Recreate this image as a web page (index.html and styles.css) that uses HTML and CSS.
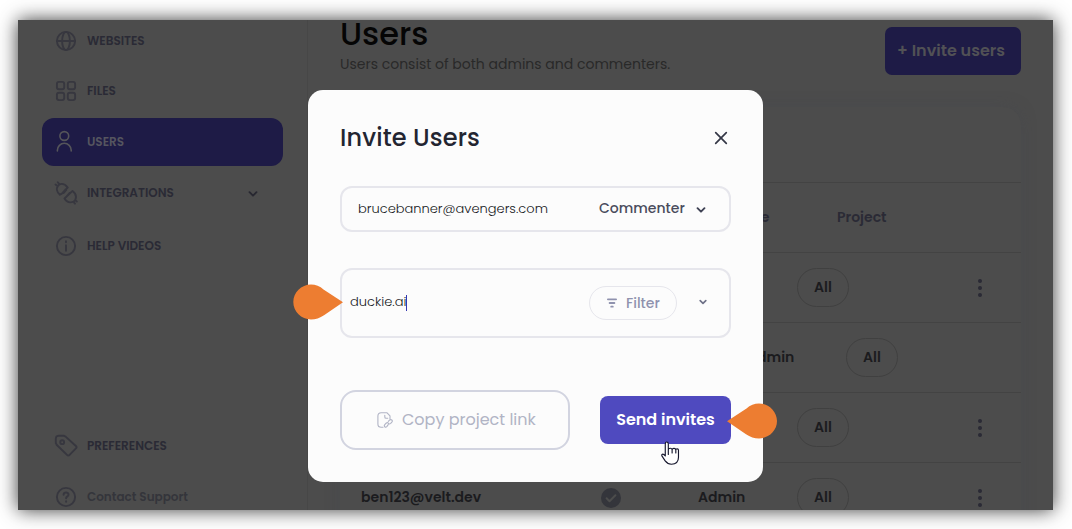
FILE: index.html
```
<!DOCTYPE html>
<html lang="en">
<head>
<meta charset="utf-8">
<title>Users</title>
<link rel="stylesheet" href="styles.css">
</head>
<body>
<div class="frame">
  <nav class="sidebar">
    <a class="nav nav-websites">
      <svg class="nav-icon" viewBox="0 0 24 24"><circle cx="12" cy="12" r="9.1"/><ellipse cx="12" cy="12" rx="3.9" ry="9.1"/><path d="M3 12h18"/></svg>
      <span>WEBSITES</span>
    </a>
    <a class="nav nav-files">
      <svg class="nav-icon" viewBox="0 0 24 24"><rect x="2.9" y="2.9" width="7.3" height="7.3" rx="2"/><rect x="13.8" y="2.9" width="7.3" height="7.3" rx="2"/><rect x="2.9" y="13.8" width="7.3" height="7.3" rx="2"/><rect x="13.8" y="13.8" width="7.3" height="7.3" rx="2"/></svg>
      <span>FILES</span>
    </a>
    <a class="nav nav-active">
      <svg class="nav-icon" viewBox="0 0 24 24"><circle cx="10.3" cy="6" r="4.4"/><path d="M3.4 21v-.8a6.9 6.9 0 0 1 13.8 0v.8"/></svg>
      <span>USERS</span>
    </a>
    <a class="nav nav-integrations">
      <svg class="nav-icon" viewBox="0 0 24 24"><path d="M1.500 3.500l2.300 1.700M3.800 1.200l1.600 2.200M3.800 5.200L5.400 3.400c2.300-1 5.500-.7 8.300 3.200l-2 1.800-3.800 4.300-2 1C2.700 11 2.200 7.500 3.800 5.200zM9.500 12l2.800-3.100M13 15l2.700-3M10.500 17.500l8-7.600c3.300 2.400 4.300 5.500 2.700 9.200l-1.600 1.600c-3.600 1.400-7 .2-9.100-3.200zM21.200 19.100l1.600 1.400M19.600 20.700l1.300 1.900"/></svg>
      <span>INTEGRATIONS</span>
      <svg class="nav-caret" viewBox="0 0 12 10"><path d="M2.500 3.200L6 6.700l3.500-3.500"/></svg>
    </a>
    <a class="nav nav-help">
      <svg class="nav-icon" viewBox="0 0 24 24"><circle cx="12" cy="12" r="9.1"/><path d="M12 11.300v5.400M12 7.300v1"/></svg>
      <span>HELP VIDEOS</span>
    </a>
    <a class="nav nav-preferences">
      <svg class="nav-icon" viewBox="0 0 24 24"><path d="M1.800 4.500l.7-2.200 2.200-.6 5.300.1 1.600.8 10.300 9.400c.9.900.9 1.600 0 2.400l-6.300 6.500c-.9.900-1.700.9-2.600 0L2.600 10.700l-.8-1.700z"/><circle cx="8.200" cy="8.200" r="1.900"/></svg>
      <span>PREFERENCES</span>
    </a>
    <a class="nav nav-contact">
      <svg class="nav-icon" viewBox="0 0 24 24"><circle cx="12" cy="12" r="9.1"/><path class="bold" d="M9.600 9.800c.1-3.200 4.900-3.200 4.900-.1 0 1.700-2.400 1.700-2.400 3.600M12.100 16.200v.5"/></svg>
      <span class="nav-mixed">Contact Support</span>
    </a>
  </nav>

  <main class="main">
    <header class="page-head">
      <div>
        <h1 class="page-title">Users</h1>
        <p class="page-sub">Users consist of both admins and commenters.</p>
      </div>
      <button class="invite">+ Invite users</button>
    </header>
    <section class="table">
      <div class="toolbar"></div>
      <div class="row row-head"><span></span><span></span><span class="head-role">Role</span><span class="head-project">Project</span></div>
      <div class="row"><span></span><span></span><span></span><span class="pill">All</span><i class="dots"></i></div>
      <div class="row row-self"><span></span><span></span><span>Admin</span><span class="pill">All</span></div>
      <div class="row"><span></span><span></span><span></span><span class="pill">All</span><i class="dots"></i></div>
      <div class="row">
        <span>ben123@velt.dev</span>
        <svg class="check" viewBox="0 0 20 20"><circle cx="10" cy="10" r="10"/><path d="M5.600 10.300l2.900 2.900 5.900-6"/></svg>
        <span>Admin</span><span class="pill">All</span><i class="dots"></i>
      </div>
    </section>
  </main>
</div>

<div class="modal" role="dialog">
  <div class="modal-head">
    <h2 class="modal-title">Invite Users</h2>
    <svg class="close" viewBox="0 0 20 20"><path d="M4.700 4.700l10.600 10.600M15.300 4.700L4.700 15.300"/></svg>
  </div>
  <div class="field field-email">
    <span class="address">brucebanner@avengers.com</span>
    <span class="commenter">Commenter</span>
    <svg class="caret" viewBox="0 0 12 10"><path d="M2.500 3.200L6 6.700l3.500-3.500"/></svg>
  </div>
  <div class="field field-site">
    <span class="typed">duckie.ai</span>
    <button class="filter">
      <svg class="filter-icon" viewBox="0 0 12 12"><path d="M1.900 2.300h8.200M3.600 6h4.800M5.200 9.700h1.600"/></svg>
      <span>Filter</span>
    </button>
    <svg class="caret caret-small" viewBox="0 0 12 10"><path d="M3.200 3.600L6 6.300l2.800-2.700"/></svg>
  </div>
  <div class="actions">
    <button class="copy">
      <svg class="copy-icon" viewBox="0 0 16 16"><path d="M6 15.300H4.200C2 15.300.9 14.200.9 12V4C.9 1.800 2 .7 4.200.7h5.600L13 3.900V7M7.800 3.300v1.600c0 .8.500 1.300 1.300 1.300h1.600"/><path d="M11.300 9.400l1.200-1.200c1.700-1.500 3.700.3 2.300 2l-1.100 1.200c-.9.800-1.700.7-2.200.2M11.200 12.600l-1.200 1.800c-1.700 1.800-3.500-.2-2.200-1.700l1.300-1.500c.9-.7 1.700-.6 2.200 0"/></svg>
      <span>Copy project link</span>
    </button>
    <button class="send">Send invites</button>
  </div>
</div>

<svg class="pin pin-site" viewBox="0 0 50 36"><path d="M50 18.300L31 31.200C27 34 22.500 35.400 18 35.400 8.300 35.400.3 27.700.3 18S8.300.4 18 .4c4.500 0 9 1.500 12.500 5z"/></svg>
<svg class="pin pin-send" viewBox="0 0 50 36"><path d="M0 18.300L19 31.200C23 34 27.500 35.400 32 35.400c9.700 0 18-7.700 18-17.400S41.700.4 32 .4c-4.500 0-9 1.500-12.500 5z"/></svg>
<svg class="pointer" viewBox="0 0 20 25"><path d="M7.700 14V3c0-2.700-3.200-2.700-3.200 0v12.600L3 14.100c-1.600-1-2.700.4-1.900 1.700l3.300 5c1.700 2.300 3.700 3.500 6.600 3.500 4.900 0 7.400-3 7.400-7.200V9.600c0-1.900-2.600-2-2.800-.4-.3-2-3.300-2.200-3.900-.4C11.100 7 8.100 7.100 7.700 9M11.700 8.500v4M15.600 9v3.500"/></svg>
</body>
</html>
```
FILE: styles.css
```
* { box-sizing: border-box; }
body {
  margin: 0;
  width: 1072px;
  height: 529px;
  padding: 20px 19px 19px 18px;
  position: relative;
  overflow: hidden;
  background: #fff;
  font-family: Poppins, Inter, sans-serif;
}
h1, h2, p { margin: 0; }
button { font-family: inherit; border: 0; padding: 0; background: none; }
svg { flex: none; fill: none; stroke-linecap: round; stroke-linejoin: round; }

.frame {
  display: flex;
  width: 1035px;
  height: 490px;
  background: #4c4c4c;
  box-shadow: 0 0 18px rgba(0, 0, 0, .78);
}
.sidebar {
  display: flex;
  flex-direction: column;
  width: 290px;
  height: 490px;
  padding: 0 24px;
  border-right: 1px solid #474747;
  overflow: hidden;
}
.nav {
  display: flex;
  flex: none;
  align-items: center;
  height: 48px;
  padding-left: 12px;
  color: #2a2a35;
  font-size: 12px;
  font-weight: 600;
}
.nav-icon { width: 24px; height: 24px; margin-right: 9px; stroke: #37373f; stroke-width: 1.9; }
.nav-icon .bold { stroke-width: 2; }
.nav-caret { width: 12px; height: 10px; margin: 1px 24px 0 auto; stroke: #282831; stroke-width: 1.9; }
.nav-websites { margin-top: -3px; }
.nav-files { margin-top: 2px; }
.nav-active { width: 241px; margin-top: 3px; border-radius: 12px; background: #1e1b46; color: #55555f; }
.nav-active .nav-icon { stroke: #55555a; stroke-width: 1.6; }
.nav-integrations { margin-top: 3px; }
.nav-help { margin-top: 5px; }
.nav-preferences { margin-top: 152px; }
.nav-contact { margin-top: 3px; }
.nav-mixed { color: #34353b; }

.main { width: 745px; height: 490px; padding: 0 32px; overflow: hidden; }
.page-head { display: flex; justify-content: space-between; height: 87px; }
.page-title { height: 34px; color: #050505; font-size: 32px; line-height: 28px; font-weight: 500; }
.page-sub { color: #292929; font-size: 14px; line-height: 20px; }
.invite {
  width: 136px;
  height: 48px;
  margin-top: 7px;
  padding: 0 4px 2px 0;
  border-radius: 7px;
  background: #1e1b46;
  color: #515155;
  font-size: 16px;
  font-weight: 600;
}
.table { height: 460px; border-radius: 18px; background: #4c4c4c; box-shadow: 0 0 14px rgba(69, 71, 78, .5); }
.toolbar { height: 76px; border-bottom: 1px solid #434343; }
.row {
  display: grid;
  grid-template-columns: 240px 97px 99px 169px 30px;
  align-items: center;
  height: 70px;
  padding-left: 21px;
  border-bottom: 1px solid #434343;
  color: #1b1b1e;
  font-size: 14px;
  font-weight: 600;
}
.row-head { color: #2a2a35; }
.head-role { padding-left: 41px; }
.head-project { padding-left: 40px; }
.row-self { grid-template-columns: 240px 146px 99px 168px; }
.pill { width: 52px; height: 39px; border: 1px solid #404040; border-radius: 20px; line-height: 37px; text-align: center; }
.dots { width: 4px; height: 4px; margin-left: 12px; border-radius: 50%; background: #2a2a35; box-shadow: 0 -7px #2a2a35, 0 7px #2a2a35; }
.check { width: 20px; height: 20px; }
.check circle { fill: #34353b; }
.check path { stroke: #4c4c4c; stroke-width: 2; }

.modal {
  position: absolute;
  left: 308px;
  top: 90px;
  width: 455px;
  height: 392px;
  padding: 32px;
  border-radius: 15px;
  background: #fcfcfc;
}
.modal-head { display: flex; align-items: center; justify-content: space-between; height: 32px; }
.modal-title { padding-bottom: 2px; color: #232531; font-size: 24px; font-weight: 500; letter-spacing: .15px; }
.close { width: 20px; height: 20px; stroke: #343746; stroke-width: 1.7; }
.field { display: flex; align-items: center; border: 2px solid #e6e6ec; border-radius: 12px; }
.field-email { height: 46px; margin-top: 32px; padding-left: 16px; }
.address { width: 241px; color: #171923; font-size: 13px; font-weight: 300; }
.commenter { width: 96px; padding-bottom: 1px; color: #4a4c5c; font-size: 14px; font-weight: 500; }
.caret { width: 12px; height: 10px; margin-top: 1px; stroke: #3f4254; stroke-width: 1.9; }
.field-site { height: 70px; margin-top: 36px; padding-left: 8px; }
.typed { height: 16px; margin-bottom: 1px; border-right: 1px solid #3538b0; color: #171923; font-size: 13px; line-height: 14px; font-weight: 300; }
.filter {
  display: flex;
  align-items: center;
  width: 88px;
  height: 34px;
  margin-left: auto;
  padding-left: 16px;
  border: 1px solid #e6e6ec;
  border-radius: 17px;
  color: #8f92ae;
  font-size: 14px;
  font-weight: 500;
}
.filter-icon { width: 12px; height: 12px; margin-right: 8px; stroke: #8f92ae; stroke-width: 1.8; }
.caret-small { margin: 0 20px 2px 20px; stroke: #6f7288; stroke-width: 1.7; }
.actions { display: flex; align-items: center; justify-content: space-between; height: 60px; margin-top: 52px; }
.copy {
  display: flex;
  align-items: center;
  width: 230px;
  height: 60px;
  padding: 0 0 1px 35px;
  border: 2px solid #d2d4e0;
  border-radius: 16px;
  color: #b1b4c5;
  font-size: 16px;
}
.copy-icon { width: 16px; height: 16px; margin-right: 9px; stroke: #b1b4c5; stroke-width: 1.1; }
.send { width: 131px; height: 48px; padding-bottom: 2px; border-radius: 8px; background: #4f4abf; color: #fff; font-size: 16px; font-weight: 600; }

.pin { position: absolute; width: 50px; height: 36px; fill: #ed7d31; }
.pin-site { left: 293px; top: 284px; }
.pin-send { left: 727px; top: 403px; }
.pointer { position: absolute; left: 661px; top: 441px; width: 19px; height: 24px; fill: #fff; stroke: #15162c; stroke-width: 1.2; }
```
